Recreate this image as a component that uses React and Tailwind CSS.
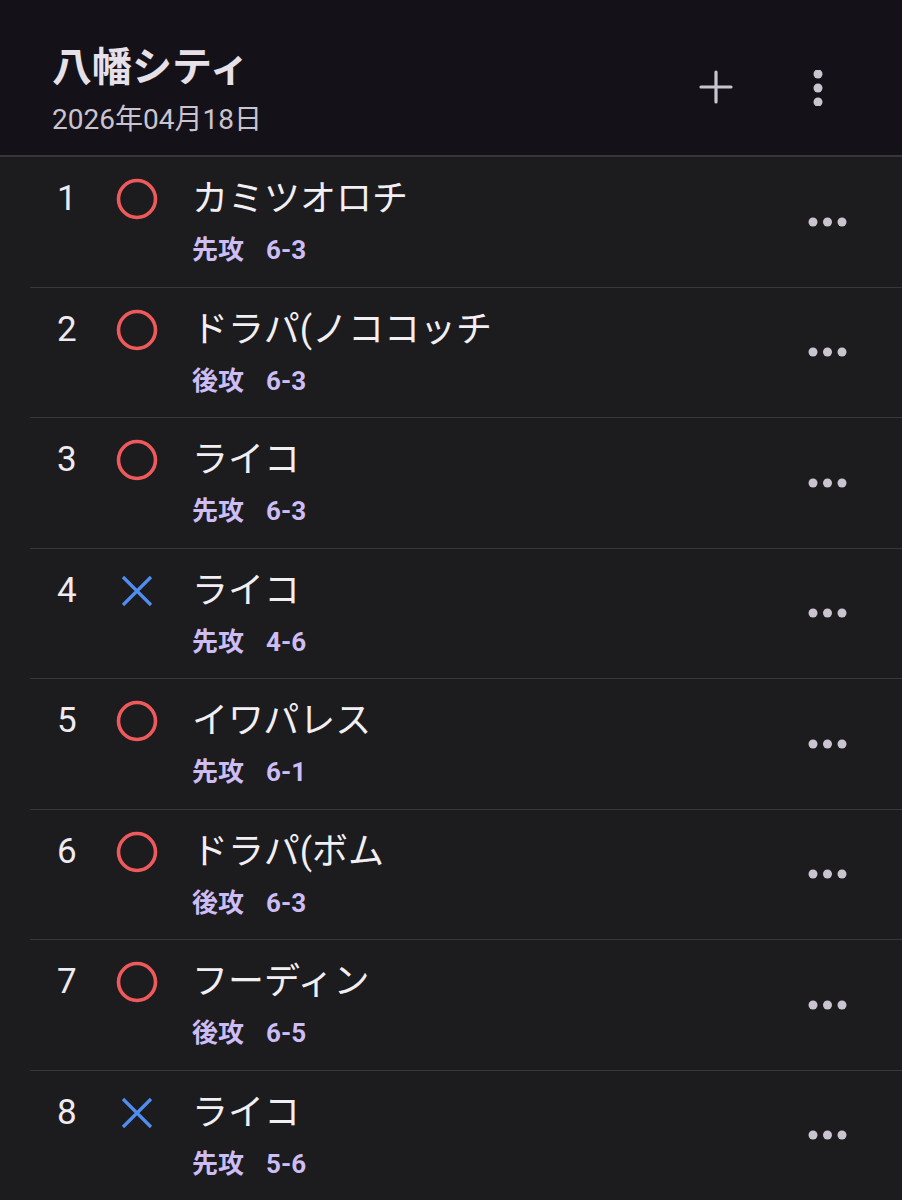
import React from "react";

const rows = [
  { n: 1, win: true, name: "カミツオロチ", turn: "先攻", score: "6-3" },
  { n: 2, win: true, name: "ドラパ(ノココッチ", turn: "後攻", score: "6-3" },
  { n: 3, win: true, name: "ライコ", turn: "先攻", score: "6-3" },
  { n: 4, win: false, name: "ライコ", turn: "先攻", score: "4-6" },
  { n: 5, win: true, name: "イワパレス", turn: "先攻", score: "6-1" },
  { n: 6, win: true, name: "ドラパ(ボム", turn: "後攻", score: "6-3" },
  { n: 7, win: true, name: "フーディン", turn: "後攻", score: "6-5" },
  { n: 8, win: false, name: "ライコ", turn: "先攻", score: "5-6" },
];

const font = { fontFamily: '"Roboto", "Noto Sans CJK JP", sans-serif' };

function Mark({ win }) {
  return (
    <div className="w-[42px] h-[40px] flex items-center justify-center">
      {win ? (
        <svg width="42" height="42" viewBox="0 0 42 42">
          <circle cx="21" cy="21" r="18.5" fill="none" stroke="#ee5a5c" strokeWidth="3.6" />
        </svg>
      ) : (
        <svg width="32" height="32" viewBox="0 0 32 32">
          <path d="M2 2 L30 30 M30 2 L2 30" stroke="#4f8ef0" strokeWidth="3.2" strokeLinecap="butt" />
        </svg>
      )}
    </div>
  );
}

function Dots() {
  return (
    <svg width="40" height="12" viewBox="0 0 40 12">
      <circle cx="5" cy="6" r="4.5" fill="#cac4d0" />
      <circle cx="19.5" cy="6" r="4.5" fill="#cac4d0" />
      <circle cx="34" cy="6" r="4.5" fill="#cac4d0" />
    </svg>
  );
}

export default function App() {
  return (
    <div className="w-[902px] h-[1200px] overflow-hidden bg-[#1c1b1e]" style={font}>
      <header className="h-[155px] bg-[#141218] flex pl-[52px] pr-[79px]">
        <div className="flex flex-col pt-[44px]">
          <div className="text-[40px] leading-[48px] font-bold text-[#e6e0e9]">八幡シティ</div>
          <div className="text-[28px] leading-[34px] mt-[11px] text-[#cac4d0]">2026年04月18日</div>
        </div>
        <div className="ml-auto flex items-start pt-[70px] gap-[80px]">
          <svg width="34" height="34" viewBox="0 0 34 34">
            <path d="M17 2 V32 M2 17 H32" stroke="#cac4d0" strokeWidth="3.2" strokeLinecap="round" />
          </svg>
          <svg width="10" height="36" viewBox="0 0 10 36">
            <circle cx="5" cy="4" r="4.5" fill="#cac4d0" />
            <circle cx="5" cy="18" r="4.5" fill="#cac4d0" />
            <circle cx="5" cy="32" r="4.5" fill="#cac4d0" />
          </svg>
        </div>
      </header>
      <div className="h-[2px] bg-[#38363c]" />
      <div>
        {rows.map((r) => (
          <div
            key={r.n}
            className="ml-[30px] h-[130.5px] border-b border-[#38363b] flex items-start pl-[27px] pr-[54px] pt-[22px]"
          >
            <div className="w-[59px] text-[35px] leading-[40px] text-[#eeeaf0]">{r.n}</div>
            <Mark win={r.win} />
            <div className="ml-[34px] flex flex-col">
              <div className="text-[36px] leading-[40px] text-[#f2eff4]">{r.name}</div>
              <div className="mt-[16px] text-[26px] leading-[30px] font-bold text-[#cdbdf5] flex">
                <span>{r.turn}</span>
                <span className="ml-[22px]">{r.score}</span>
              </div>
            </div>
            <div className="ml-auto self-center mt-[-22px]">
              <Dots />
            </div>
          </div>
        ))}
      </div>
    </div>
  );
}
